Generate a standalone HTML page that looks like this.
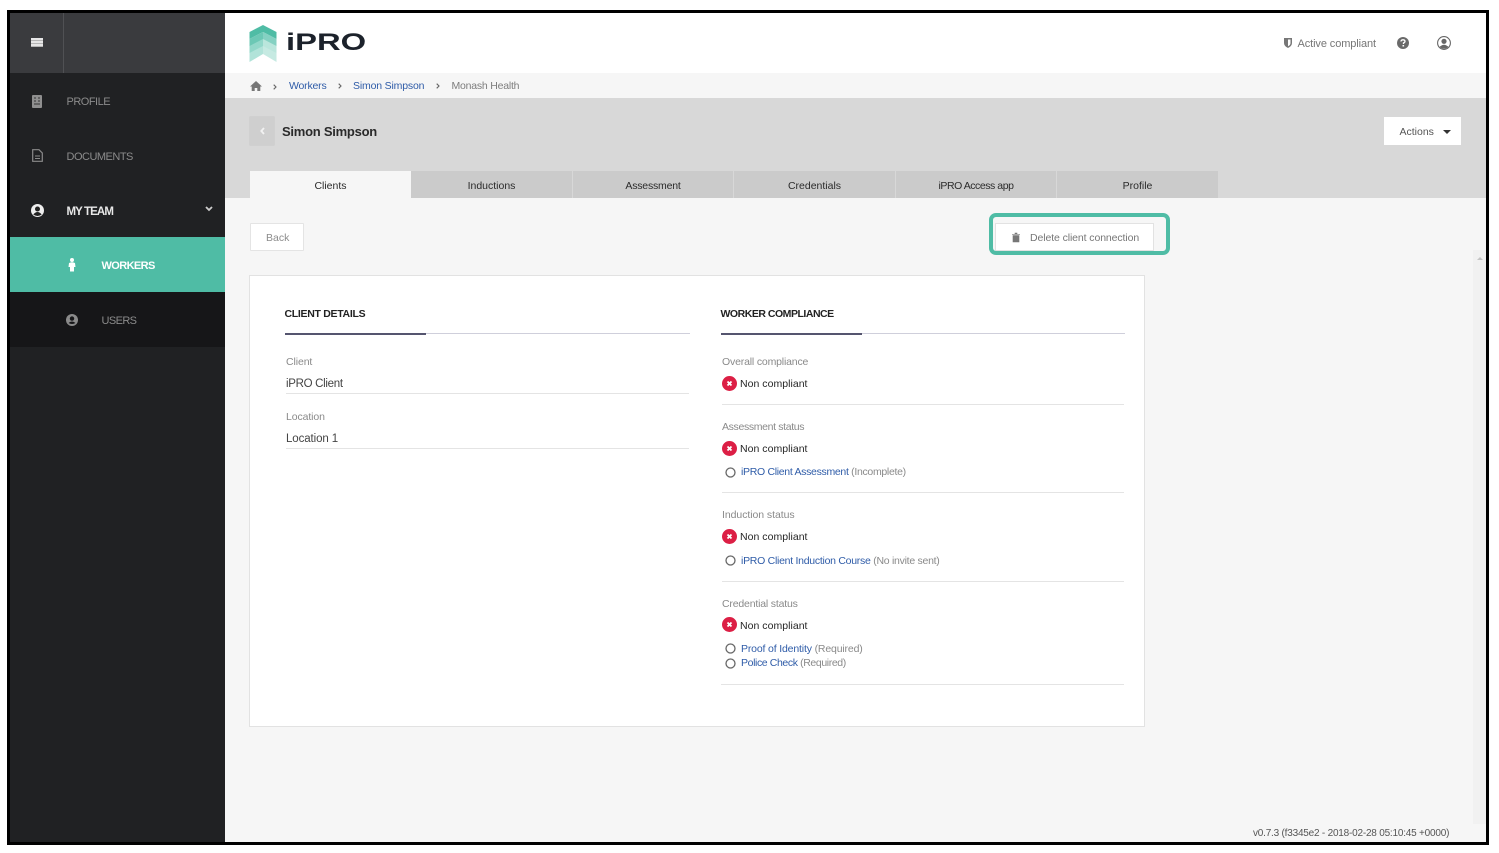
<!DOCTYPE html>
<html><head><meta charset="utf-8"><title>iPRO</title>
<style>
html,body{margin:0;padding:0;background:#fff;}
body{width:1499px;height:853px;overflow:hidden;position:relative;font-family:"Liberation Sans",sans-serif;}
div,span.t,a{position:absolute;}
.t{white-space:nowrap;line-height:14px;font-size:11px;color:#6e6e6e;}
.t span,.t a{position:static;}
.b{background:#000;}
.link{color:#2f5ca8;}
.nc{color:#262626;font-size:10.5px;letter-spacing:.03px;}
.lab{color:#8a8a8a;font-size:10.5px;}
.nav{color:#8b8b8b;font-size:11px;}
.tab{top:171px;height:27px;background:#cbcbcb;text-align:center;line-height:29px;font-size:10.5px;color:#2b2b2b;padding-top:1px;box-sizing:border-box;}
.hr{height:1px;background:#e4e4e4;}
.head{font-weight:bold;color:#222;font-size:10.5px;}
svg{position:absolute;overflow:visible;}
</style></head><body>
<!-- main backgrounds -->
<div style="left:10px;top:13px;width:1476px;height:829px;background:#f6f6f6"></div>
<div style="left:225px;top:13px;width:1261px;height:60px;background:#fff"></div>
<div style="left:225px;top:98px;width:1261px;height:100px;background:#d8d8d8"></div>
<div style="left:1473px;top:250px;width:13px;height:574px;background:#f1f1f1"></div>
<svg style="left:1477px;top:256px" width="6" height="4"><path d="M0 4L3 1L6 4Z" fill="#c4c4c4"/></svg>

<!-- sidebar -->
<div style="left:10px;top:13px;width:215px;height:829px;background:#202123"></div>
<div style="left:10px;top:13px;width:215px;height:60px;background:#3a3b3e"></div>
<div style="left:63px;top:13px;width:1px;height:60px;background:#505154"></div>
<div style="left:31px;top:38px;width:12px;height:9px;background:repeating-linear-gradient(#e6e6e6 0 2px,#b5b5b5 2px 3px)"></div>
<svg style="left:32px;top:95px" width="10" height="13"><rect width="10" height="13" rx="1" fill="#8f8f8f"/><path d="M2 3H4M6 3H8M2 6H4M6 6H8M2 9H8" stroke="#333" stroke-width="1"/></svg>
<span class="t nav" style="left:66.5px;top:95px;letter-spacing:-.5px">PROFILE</span>
<svg style="left:32px;top:149px" width="11" height="13"><path d="M.7.7H7L10.300 4V12.300H.7Z" fill="none" stroke="#8a8a8a" stroke-width="1.200"/><path d="M3 7H8M3 9.500H8" stroke="#8a8a8a"/></svg>
<span class="t nav" style="left:66.5px;top:150px;letter-spacing:-.5px">DOCUMENTS</span>
<svg style="left:31px;top:204px" width="13" height="13"><circle cx="6.500" cy="6.500" r="6.500" fill="#eee"/><circle cx="6.500" cy="5" r="2.500" fill="#222"/><path d="M2.300 10.500Q6.500 5.500 10.700 10.500Q6.500 13.500 2.300 10.500Z" fill="#222"/></svg>
<span class="t" style="left:66.5px;top:205px;color:#e8e8e8;font-size:11.5px;font-weight:bold;letter-spacing:-.9px">MY TEAM</span>
<svg style="left:205px;top:206px" width="8" height="6"><path d="M1 1L4 4L7 1" fill="none" stroke="#ccc" stroke-width="1.800"/></svg>
<div style="left:10px;top:237px;width:215px;height:55px;background:#4fbca5"></div>
<svg style="left:68px;top:258px" width="8" height="14"><circle cx="4" cy="2" r="2" fill="#fff"/><path d="M1 5Q4 3.500 7 5L7.500 9H6V13.500H2V9H.5Z" fill="#fff"/></svg>
<span class="t" style="left:101.500px;top:259px;color:#fff;font-size:11px;font-weight:bold;letter-spacing:-.6px">WORKERS</span>
<div style="left:10px;top:292px;width:215px;height:55px;background:#161618"></div>
<svg style="left:66px;top:313.500px" width="12" height="12"><circle cx="6" cy="6" r="6" fill="#8b8b8b"/><circle cx="6" cy="4.600" r="2.200" fill="#161618"/><path d="M2.500 9Q6 6 9.500 9Q6 11 2.500 9Z" fill="#161618"/></svg>
<span class="t nav" style="left:101.500px;top:313.500px;letter-spacing:-.6px">USERS</span>

<!-- logo -->
<svg style="left:249px;top:25px" width="28" height="37" viewBox="0 0 28 37">
<path d="M14 0L27.500 7V14L14 7L.5 14V7Z" fill="#4fbca5"/>
<path d="M.5 14L14 7V21L.5 28Z" fill="#6cc8b5"/>
<path d="M27.500 14L14 7V21L27.500 28Z" fill="#85d1c2"/>
<path d="M.5 21L14 14V29L.5 37Z" fill="#9edccf" opacity=".8"/>
<path d="M27.500 21L14 14V29L27.500 37Z" fill="#c0e8df" opacity=".9"/>
</svg>
<span class="t" style="left:286px;top:30px;line-height:26px;font-size:24px;font-weight:bold;color:#1c222b;transform:scaleX(1.365);transform-origin:left">iPRO</span>

<!-- top right -->
<svg style="left:1284px;top:38px" width="8" height="10"><path d="M0 0H8V5Q8 8 4 10Q0 8 0 5Z" fill="#777"/><path d="M4 1.500H6.500V5Q6.500 7 4 8.300Z" fill="#fff"/></svg>
<span class="t" style="left:1297.500px;top:36.500px;font-size:11px;letter-spacing:-.1px;color:#767676">Active compliant</span>
<svg style="left:1397px;top:36.500px" width="12" height="12"><circle cx="6" cy="6" r="6" fill="#6a6a6a"/><path d="M4 4.500Q4 2.800 6 2.800Q8 2.800 8 4.400Q8 5.400 6.500 6V7" fill="none" stroke="#fff" stroke-width="1.300"/><rect x="5.500" y="8" width="1.600" height="1.500" fill="#fff"/></svg>
<svg style="left:1437px;top:36px" width="14" height="14"><circle cx="7" cy="7" r="6.400" fill="#fff" stroke="#666" stroke-width="1.100"/><circle cx="7" cy="5.300" r="2.600" fill="#666"/><path d="M2.500 11Q7 6.500 11.500 11Q7 14.500 2.500 11Z" fill="#666"/></svg>

<!-- breadcrumb -->
<svg style="left:250px;top:81px" width="12" height="10"><path d="M6 0L12 5.500H10.300V10H7.300V7H4.700V10H1.700V5.500H0Z" fill="#777"/></svg>
<svg style="left:273px;top:83.500px" width="4" height="6"><path d="M.7.7L3 3L.7 5.300" fill="none" stroke="#666" stroke-width="1.100"/></svg>
<span class="t link" style="left:289px;top:79px;font-size:10.500px;letter-spacing:-.2px">Workers</span>
<svg style="left:338px;top:82.500px" width="4" height="6"><path d="M.7.7L3 3L.7 5.300" fill="none" stroke="#666" stroke-width="1.100"/></svg>
<span class="t link" style="left:353px;top:79px;font-size:10.500px;letter-spacing:-.17px">Simon Simpson</span>
<svg style="left:436px;top:82.500px" width="4" height="6"><path d="M.7.7L3 3L.7 5.300" fill="none" stroke="#666" stroke-width="1.100"/></svg>
<span class="t" style="left:451.500px;top:79px;font-size:10.500px;letter-spacing:-.22px;color:#7d7d7d">Monash Health</span>

<!-- header -->
<div style="left:250px;top:117px;width:24px;height:28px;background:#cfcfcf;box-shadow:0 0 0 .5px #c8c8c8"></div>
<svg style="left:260px;top:127px" width="5" height="8"><path d="M4 1L1.300 4L4 7" fill="none" stroke="#f2f2f2" stroke-width="1.800"/></svg>
<span class="t" style="left:282px;top:125px;font-size:13px;font-weight:bold;color:#2a2a2a;letter-spacing:-.25px">Simon Simpson</span>
<div style="left:1384px;top:117px;width:77px;height:28px;background:#fff"></div>
<span class="t" style="left:1399.500px;top:124.500px;font-size:10.500px;color:#555">Actions</span>
<svg style="left:1443px;top:129.500px" width="8" height="4"><path d="M0 0H8L4 4Z" fill="#333"/></svg>

<!-- tabs -->
<div class="tab" style="left:250px;width:161px;background:#f6f6f6">Clients</div>
<div class="tab" style="left:411px;width:161px">Inductions</div>
<div class="tab" style="left:573px;width:160px;letter-spacing:-.2px">Assessment</div>
<div class="tab" style="left:734px;width:161px">Credentials</div>
<div class="tab" style="left:896px;width:160px;letter-spacing:-.45px">iPRO Access app</div>
<div class="tab" style="left:1057px;width:161px">Profile</div>

<!-- buttons -->
<div style="left:250px;top:223px;height:28px;background:#fff;border:1px solid #e4e4e4;box-sizing:border-box;width:54px;border-radius:1px"></div>
<span class="t" style="left:266px;top:230.500px;font-size:10.500px;color:#8c8c8c">Back</span>
<div style="left:995px;top:223px;width:159px;height:28px;background:#fff;border:1px solid #e2e2e2;box-sizing:border-box"></div>
<div style="left:989px;top:213px;width:181px;height:42px;border:4px solid #4fbca5;border-radius:7px;box-sizing:border-box"></div>
<svg style="left:1012px;top:233px" width="8" height="9"><path d="M0 1.300H8M3 1V0H5V1M1 2.500H7V9H1Z" fill="#777" stroke="#777" stroke-width=".6"/></svg>
<span class="t" style="left:1030px;top:230.500px;font-size:10.500px;color:#777;letter-spacing:-.1px">Delete client connection</span>

<!-- card -->
<div style="left:249px;top:275px;width:896px;height:452px;background:#fff;border:1px solid #e2e2e2;box-sizing:border-box"></div>
<span class="t head" style="left:284.500px;top:306.500px;letter-spacing:-.3px">CLIENT DETAILS</span>
<div style="left:285px;top:333px;width:405px;height:1px;background:#cfcfdb"></div>
<div style="left:285px;top:333px;width:141px;height:2px;background:#55556f"></div>
<span class="t head" style="left:720.500px;top:306.500px;letter-spacing:-.48px">WORKER COMPLIANCE</span>
<div style="left:721px;top:333px;width:404px;height:1px;background:#cfcfdb"></div>
<div style="left:721px;top:333px;width:141px;height:2px;background:#55556f"></div>

<span class="t lab" style="left:286px;top:355px;letter-spacing:-.1px">Client</span>
<span class="t" style="left:286px;top:377px;font-size:11.5px;color:#444;letter-spacing:-.3px">iPRO Client</span>
<div class="hr" style="left:286px;top:393px;width:403px"></div>
<span class="t lab" style="left:286px;top:410px;letter-spacing:-.1px">Location</span>
<span class="t" style="left:286px;top:432px;font-size:11.5px;color:#444;letter-spacing:-.1px">Location 1</span>
<div class="hr" style="left:286px;top:448px;width:403px"></div>

<!-- compliance -->
<span class="t lab" style="left:722px;top:355px;letter-spacing:-.17px">Overall compliance</span>
<svg style="left:722px;top:376px" width="15" height="15"><circle cx="7.500" cy="7.500" r="7.500" fill="#dc1f45"/><path d="M5.500 5.500L9.500 9.500M9.500 5.500L5.500 9.500" stroke="#fff" stroke-width="1.800"/></svg>
<span class="t nc" style="left:740px;top:377px">Non compliant</span>
<div class="hr" style="left:722px;top:404px;width:402px"></div>

<span class="t lab" style="left:722px;top:420px;letter-spacing:-.35px">Assessment status</span>
<svg style="left:722px;top:440.500px" width="15" height="15"><circle cx="7.500" cy="7.500" r="7.500" fill="#dc1f45"/><path d="M5.500 5.500L9.500 9.500M9.500 5.500L5.500 9.500" stroke="#fff" stroke-width="1.800"/></svg>
<span class="t nc" style="left:740px;top:442px">Non compliant</span>
<svg style="left:725px;top:466.500px" width="11" height="11"><circle cx="5.500" cy="5.500" r="4.500" fill="none" stroke="#666" stroke-width="1.300"/></svg>
<span class="t lab" style="left:741px;top:465px;letter-spacing:-.31px"><span class="link">iPRO Client Assessment</span> (Incomplete)</span>
<div class="hr" style="left:722px;top:492px;width:402px"></div>

<span class="t lab" style="left:722px;top:508px;letter-spacing:-.06px">Induction status</span>
<svg style="left:722px;top:529px" width="15" height="15"><circle cx="7.500" cy="7.500" r="7.500" fill="#dc1f45"/><path d="M5.500 5.500L9.500 9.500M9.500 5.500L5.500 9.500" stroke="#fff" stroke-width="1.800"/></svg>
<span class="t nc" style="left:740px;top:530px">Non compliant</span>
<svg style="left:725px;top:555px" width="11" height="11"><circle cx="5.500" cy="5.500" r="4.500" fill="none" stroke="#666" stroke-width="1.300"/></svg>
<span class="t lab" style="left:741px;top:553.500px;letter-spacing:-.27px"><span class="link">iPRO Client Induction Course</span> (No invite sent)</span>
<div class="hr" style="left:722px;top:581px;width:402px"></div>

<span class="t lab" style="left:722px;top:597px;letter-spacing:-.18px">Credential status</span>
<svg style="left:722px;top:617px" width="15" height="15"><circle cx="7.500" cy="7.500" r="7.500" fill="#dc1f45"/><path d="M5.500 5.500L9.500 9.500M9.500 5.500L5.500 9.500" stroke="#fff" stroke-width="1.800"/></svg>
<span class="t nc" style="left:740px;top:618.500px">Non compliant</span>
<svg style="left:725px;top:643px" width="11" height="11"><circle cx="5.500" cy="5.500" r="4.500" fill="none" stroke="#666" stroke-width="1.300"/></svg>
<span class="t lab" style="left:741px;top:642px;letter-spacing:-.16px"><span class="link">Proof of Identity</span> (Required)</span>
<svg style="left:725px;top:657.500px" width="11" height="11"><circle cx="5.500" cy="5.500" r="4.500" fill="none" stroke="#666" stroke-width="1.300"/></svg>
<span class="t lab" style="left:741px;top:656px;letter-spacing:-.39px"><span class="link">Police Check</span> (Required)</span>
<div class="hr" style="left:721px;top:684px;width:403px"></div>

<!-- version -->
<span class="t" style="left:1253px;top:827px;font-size:10px;color:#555;letter-spacing:-.21px">v0.7.3 (f3345e2 - 2018-02-28 05:10:45 +0000)</span>

<!-- black frame -->
<div class="b" style="left:7px;top:10px;width:1482px;height:3px"></div>
<div class="b" style="left:7px;top:842px;width:1482px;height:3px"></div>
<div class="b" style="left:7px;top:10px;width:3px;height:835px"></div>
<div class="b" style="left:1486px;top:10px;width:3px;height:835px"></div>
</body></html>
